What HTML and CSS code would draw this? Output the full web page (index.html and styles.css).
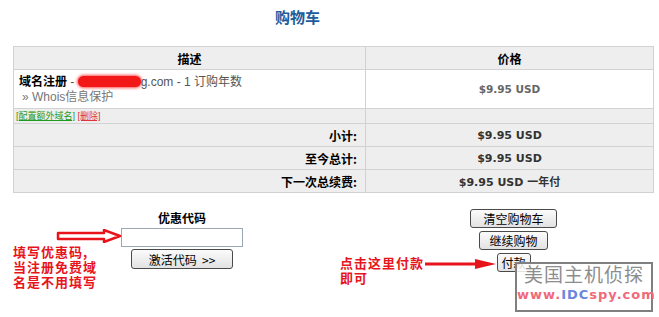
FILE: index.html
```html
<!DOCTYPE html>
<html>
<head>
  <meta charset="UTF-8">
  <title>购物车</title>
  <link rel="stylesheet" href="styles.css">
</head>
<body>
  <h1 class="page-title">购物车</h1>

  <table class="cart">
    <tr class="head">
      <th class="desc-col">描述</th>
      <th>价格</th>
    </tr>
    <tr class="item">
      <td class="item-desc">
        <b>域名注册</b> - <span class="blur-name"></span>g.com - 1 订购年数<br>
        <span class="addon">» Whois信息保护</span>
      </td>
      <td class="price">$9.95 USD</td>
    </tr>
    <tr class="links">
      <td><a class="green" href="#">[配置额外域名]</a> <a class="red" href="#">[删除]</a></td>
      <td></td>
    </tr>
    <tr class="sum">
      <td class="label">小计:</td>
      <td class="value">$9.95 USD</td>
    </tr>
    <tr class="sum">
      <td class="label">至今总计:</td>
      <td class="value">$9.95 USD</td>
    </tr>
    <tr class="sum">
      <td class="label">下一次总续费:</td>
      <td class="value">$9.95 USD 一年付</td>
    </tr>
  </table>

  <div class="actions">
    <div class="promo">
      <div class="promo-title">优惠代码</div>
      <input type="text" class="promo-input">
      <button class="btn">激活代码 &nbsp;&gt;&gt;</button>
    </div>
    <div class="cart-buttons">
      <button class="btn">清空购物车</button>
      <button class="btn">继续购物</button>
      <button class="btn">付款</button>
    </div>

    <!-- annotations drawn over the screenshot -->
    <svg class="arrow arrow-left" width="66" height="14" viewBox="0 0 66 14">
      <path d="M2 4 H48 V1 L64 7 L48 13 V10 H2 Z" fill="#fff" stroke="#e8141c" stroke-width="2.5" stroke-linejoin="round"/>
    </svg>
    <div class="note note-left">填写优惠码,<br>当注册免费域<br>名是不用填写</div>

    <svg class="arrow arrow-right" width="72" height="12" viewBox="0 0 72 12">
      <path d="M0 4.5 H50 V1 L71 6 L50 11 V7.5 H0 Z" fill="#e8141c"/>
    </svg>
    <div class="note note-right">点击这里付款<br>即可</div>

    <div class="watermark">
      <div class="wm-cn">美国主机侦探</div>
      <div class="wm-url">www.<span>IDC</span>spy.com</div>
    </div>
  </div>
</body>
</html>
```

FILE: styles.css
```css
body { margin: 0; font-family: "Liberation Sans", "Noto Sans CJK SC", sans-serif; font-size: 12px; color: #000; background: #fff; }

.page-title { margin: 0; padding: 7px 0 0 275px; height: 46px; box-sizing: border-box; font-size: 15px; color: #1d5c9c; font-family: "Noto Sans CJK SC", sans-serif; font-weight: 700; line-height: 20px; }

.cart { margin-left: 13px; width: 641px; border-collapse: collapse; border: 1px solid #c4c4c4; }
.cart td, .cart th { border: 1px solid #d2d2d2; padding: 0 5px; }
.cart th { height: 22px; background: #eeeeee; font-family: "Noto Sans CJK SC", sans-serif; font-size: 12px; font-weight: 700; }
.cart .desc-col { width: 341px; }

.item td { height: 38px; background: #fff; }
.item-desc { color: #555; line-height: 15px; font-family: "Liberation Sans", "Noto Sans CJK SC", sans-serif; }
.item-desc b { color: #000; font-family: "Noto Sans CJK SC", sans-serif; }
.blur-name { display: inline-block; width: 63px; height: 11px; border-radius: 6px; background: #f21818; vertical-align: -1px; box-shadow: 0 0 3px 1px #ff5050; }
.addon { color: #777; padding-left: 3px; }
.price { text-align: center; color: #666; font-weight: 700; font-family: "DejaVu Sans", sans-serif; font-size: 10.5px; }

.links td { height: 14px; background: #eeeeee; font-size: 9px; line-height: 12px; padding: 0 2px; }
.links a { text-decoration: underline; }
.links .green { color: #1f9a1f; }
.links .red { color: #e0313c; }

.sum td { height: 22px; background: #eeeeee; font-weight: 700; }
.sum .label { text-align: right; font-family: "Noto Sans CJK SC", sans-serif; font-size: 12px; padding-right: 8px; }
.sum .value { text-align: center; font-family: "DejaVu Sans", "Noto Sans CJK SC", sans-serif; font-size: 11px; color: #333; }

.actions { position: relative; display: flex; height: 124px; }
.promo { width: 364px; padding-top: 17px; display: flex; flex-direction: column; align-items: center; }
.promo-title { font-family: "Noto Sans CJK SC", sans-serif; font-weight: 700; font-size: 12px; line-height: 16px; margin-bottom: 2px; }
.promo-input { width: 122px; height: 19px; box-sizing: border-box; border: 1px solid #9aa7b4; margin: 0 0 2px; padding: 0; }

.cart-buttons { flex: 1; padding: 16px 0 0 4px; display: flex; flex-direction: column; align-items: center; gap: 3px; }

.btn { font-family: "Noto Sans CJK SC", sans-serif; font-size: 12px; line-height: 15px; height: 19px; padding: 0; color: #000; border: 1px solid #4a4a4a; border-radius: 3px; background: linear-gradient(#fbfbfb, #e2e2e2); }
.promo .btn { width: 102px; height: 20px; }
.cart-buttons .btn:nth-child(1) { width: 87px; }
.cart-buttons .btn:nth-child(2) { width: 69px; }
.cart-buttons .btn:nth-child(3) { width: 34px; }

.arrow { position: absolute; }
.arrow-left { left: 56px; top: 36px; }
.arrow-right { left: 425px; top: 65px; }

.note { position: absolute; color: #e8141c; font-family: "Noto Sans CJK SC", sans-serif; font-size: 13px; font-weight: 700; line-height: 15px; letter-spacing: 1px; }
.note-left { left: 13px; top: 51px; }
.note-right { left: 340px; top: 62px; }

.watermark { position: absolute; left: 515px; top: 69px; width: 134px; height: 46px; border: 2px solid #808080; background: rgba(255, 255, 255, 0.85); text-align: center; }
.wm-cn { font-family: "Noto Sans CJK SC", sans-serif; font-size: 19px; line-height: 24px; color: #8d8d8d; letter-spacing: 1px; margin-top: -2px; }
.wm-url { font-family: "DejaVu Sans", sans-serif; font-weight: 700; font-size: 13px; line-height: 18px; color: #f06a7a; letter-spacing: 1px; }
.wm-url span { color: #6a86e0; }
```
